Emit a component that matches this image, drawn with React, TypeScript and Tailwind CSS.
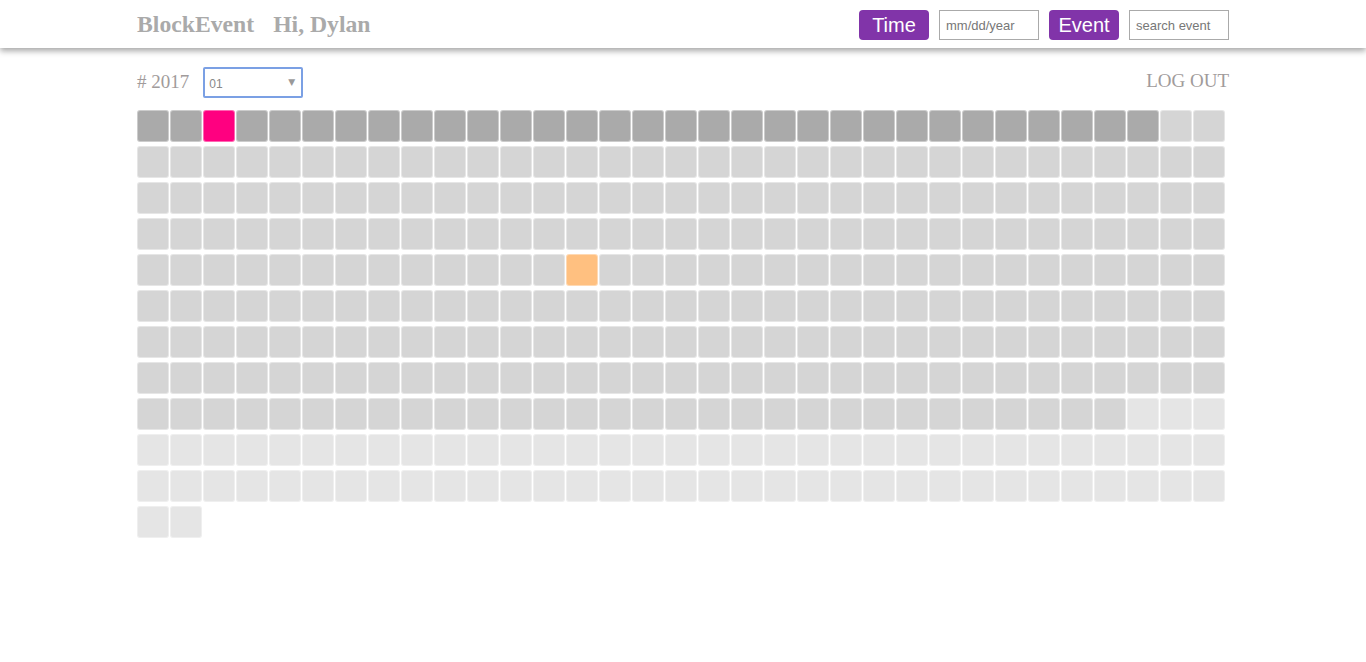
import { useState } from "react";

// day cells for the whole year, coloured by state
const TOTAL_DAYS = 365;
const MONTH_DAYS = 31; // days of the selected month
const PASSED = 294; // days already gone
const SELECTED = 2;
const HIGHLIGHT = 145;

const cellColor = (i: number) => {
  if (i === SELECTED) return "bg-[#ff0080]";
  if (i === HIGHLIGHT) return "bg-[#ffc080]";
  if (i < MONTH_DAYS) return "bg-[#aaaaaa]";
  if (i < PASSED) return "bg-[#d5d5d5]";
  return "bg-[#e5e5e5]";
};

const App = () => {
  const [month, setMonth] = useState("01");
  const days = Array.from({ length: TOTAL_DAYS }, (_, i) => i);

  return (
    <div className="min-h-screen bg-white font-['Liberation_Serif',serif]">
      {/* Top bar */}
      <header className="h-12 bg-white shadow-[0_3px_6px_rgba(0,0,0,0.35)]">
        <div className="w-[1092px] mx-auto h-full flex items-center justify-between">
          <h1 className="text-[23.7px] font-bold text-[#aaaaaa] leading-none pt-[2px]">
            <span className="mr-[19px]">BlockEvent</span>
            <span>Hi, Dylan</span>
          </h1>
          <div className="flex items-center gap-[10px] pt-[2px] font-['Liberation_Sans',Arial,sans-serif]">
            <button className="w-[70px] h-[30px] rounded-[4px] bg-[#8134a9] text-white text-[20px] leading-none">
              Time
            </button>
            <input
              placeholder="mm/dd/year"
              className="w-[100px] h-[30px] border border-[#aaaaaa] px-[6px] text-[13px] text-[#666] placeholder:text-[#777] outline-none"
            />
            <button className="w-[70px] h-[30px] rounded-[4px] bg-[#8134a9] text-white text-[20px] leading-none">
              Event
            </button>
            <input
              placeholder="search event"
              className="w-[100px] h-[30px] border border-[#aaaaaa] px-[6px] text-[13px] text-[#666] placeholder:text-[#777] outline-none"
            />
          </div>
        </div>
      </header>

      <main className="w-[1092px] mx-auto pt-[19px]">
        {/* Year / month row */}
        <div className="flex items-center justify-between h-[31px] mb-[12px]">
          <div className="flex items-center">
            <span className="text-[19px] text-[#a19b9b] mr-[14px]"># 2017</span>
            <div className="relative w-[100px] h-[31px] border-2 border-[#7ba0e4] rounded-[2px]">
              <select
                value={month}
                onChange={(e) => setMonth(e.target.value)}
                className="appearance-none w-full h-full pl-[4px] pt-[2px] text-[12px] text-[#888] font-['Liberation_Sans',Arial,sans-serif] bg-white outline-none"
              >
                {["01", "02", "03", "04", "05", "06", "07", "08", "09", "10", "11", "12"].map((m) => (
                  <option key={m} value={m}>{m}</option>
                ))}
              </select>
              <span className="pointer-events-none absolute right-[6px] top-[7px] text-[9px] text-[#999] font-['DejaVu_Sans',sans-serif]">▼</span>
            </div>
          </div>
          <button className="text-[19px] text-[#a19b9b] mt-[-2px]">LOG OUT</button>
        </div>

        {/* Year grid */}
        <div className="grid grid-cols-[repeat(33,32px)] gap-x-[1px] gap-y-[4px]">
          {days.map((i) => (
            <div
              key={i}
              className={`w-[32px] h-[32px] rounded-[3px] border border-white/40 ${cellColor(i)}`}
            />
          ))}
        </div>
      </main>
    </div>
  );
};

export default App;
